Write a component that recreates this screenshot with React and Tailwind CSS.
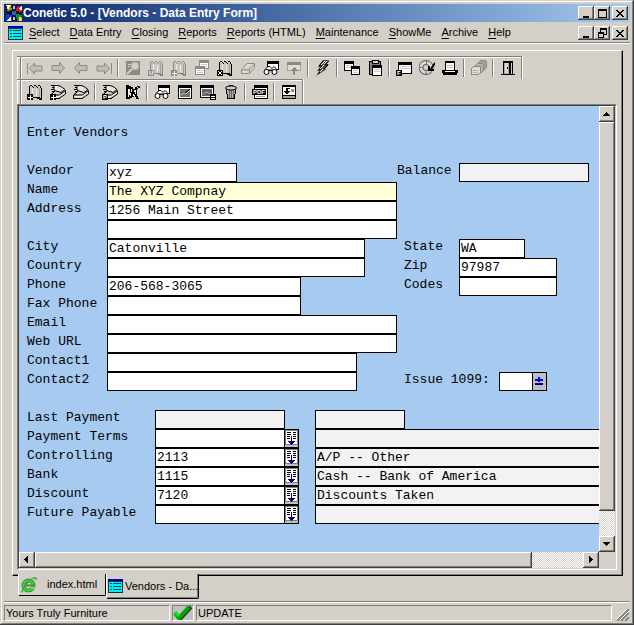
import React, { useState } from 'react';

const raised = 'bg-[#d4d0c8] shadow-[inset_-1px_-1px_0_#404040,inset_1px_1px_0_#ffffff,inset_-2px_-2px_0_#808080]';
const sunken = 'border border-t-[#808080] border-l-[#808080] border-r-white border-b-white';
const dither = 'bg-[repeating-conic-gradient(#ffffff_0_25%,#d4d0c8_0_50%)] bg-size-[2px_2px]';

/* ---------- small drawings ---------- */

const Svg = ({ children, className = 'w-4 h-4' }) => (
    <svg viewBox="0 0 16 16" className={`${className} shrink-0`} fill="none" stroke="currentColor" shapeRendering="crispEdges" aria-hidden="true">
        {children}
    </svg>
);

const Badge = ({ x = 0, y = 10, children }) => (
    <g>
        <rect x={x} y={y} width="6" height="6" fill="currentColor" stroke="none" />
        <g stroke="#fff">{children}</g>
    </g>
);

const Plus = () => <path d="M1 13.500h5M3.500 11v5" />;
const Cross = () => <path d="M1 11l4 4M5 11l-4 4" />;

const Letter = ({ x, y, size = 6, children }) => (
    <text x={x} y={y} fontSize={size} fontWeight="bold" fontFamily="Liberation Sans, sans-serif" fill="#fff" stroke="none">{children}</text>
);

const Book = ({ children }) => (
    <Svg>
        <path d="M3 2h6l5 2v11l-4-2H3z" fill="#c8c6c0" stroke="none" />
        <path d="M2 2h1v10H2zM3 1h2v1H3zM5 2h1v1H5zM6 3h1v1H6zM7 1h2v1H7zM9 2h1v1H9zM10 3h1v1h-1zM11 1h2v1h-2zM13 2h1v2h-1z" fill="currentColor" stroke="none" />
        <path d="M14 4h1v11h-1zM12 14h3v2h-3zM6 13h5v1H6zM10 13h3v2h-3z" fill="currentColor" stroke="none" />
        <path d="M5.500 4v8M9.500 5v7" stroke="#eceae4" />
        <path d="M12 4h1v9h-1z" fill="#a4a29c" stroke="none" />
        {children}
    </Svg>
);

const Pages = ({ children }) => (
    <Svg>
        <path d="M4 1.500h4l3 1 4 3-4 3-5-1.500-2-1z" fill="#e8e6e0" shapeRendering="auto" />
        <path d="M1 1.500h3M2 3.500h2M1 5.500h3M2 7.500h2" />
        <path d="M5 7L.5 11v3.500h8.500l6.500-4.500V6.500l-6 4.500H1z" fill="#d4d0c8" shapeRendering="auto" />
        <path d="M2 12.500h7l6-4" stroke="#f4f2ee" shapeRendering="auto" />
        <path d="M1 14.500h9" />
        {children}
    </Svg>
);

const Win = ({ x = 0, y = 0, w = 10, h = 9 }) => (
    <g>
        <rect x={x + 0.5} y={y + 0.5} width={w - 1} height={h - 1} fill="#fff" />
        <rect x={x} y={y} width={w} height="3" fill="currentColor" stroke="none" />
        <path d={`M${x + 2} ${y + 4.5}h${w - 4}M${x + 2} ${y + 6.5}h${w - 4}`} stroke="#c8c8c8" />
    </g>
);

const arrowLeft = 'M1.500 8l5-5.500v3H14v5H6.500v3z';
const arrowRight = 'M14.500 8l-5-5.500v3H2v5h7.500v3z';

const icons = {
    first: <Svg><path d="M.5 3v11" /><path d="M2.500 8.500l5-5.500v3H15v5H7.500v3z" fill="#c0beb8" shapeRendering="auto" /></Svg>,
    next: <Svg><path d={arrowRight} fill="#c0beb8" shapeRendering="auto" /></Svg>,
    prev: <Svg><path d={arrowLeft} fill="#c0beb8" shapeRendering="auto" /></Svg>,
    last: <Svg><path d="M15.500 3v11" /><path d="M13.500 8.500l-5-5.500v3H1v5h7.500v3z" fill="#c0beb8" shapeRendering="auto" /></Svg>,
    find: (
        <Svg>
            <path d="M1 1h14v14H1z" fill="currentColor" stroke="none" />
            <path d="M3 4h3M3 6h2" stroke="#d4d0c8" />
            <circle cx="10" cy="6" r="4" fill="#d4d0c8" shapeRendering="auto" stroke="#a8a6a0" />
            <path d="M7 9l-5 5" stroke="#d4d0c8" strokeWidth="2" shapeRendering="auto" />
        </Svg>
    ),
    bookU: <Book><Badge><Letter x="1" y="15">U</Letter></Badge></Book>,
    bookAdd: <Book><Badge><Plus /></Badge></Book>,
    bookDelete: <Book><Badge><Cross /></Badge></Book>,
    cards: <Svg><Win x={5} y={0} w={10} h={9} /><Win x={1} y={6} w={10} h={9} /></Svg>,
    eraser: (
        <Svg>
            <path d="M1.500 10L7 3.500h7.500v4L9.500 13.500h-8zM1.500 10H9l5.500-6M9.500 10v3" fill="#dedcd6" shapeRendering="auto" />
        </Svg>
    ),
    browse: (
        <Svg>
            <rect x="4.500" y="1.500" width="11" height="8" fill="#fff" />
            <path d="M4 1h12v3H4z" fill="currentColor" stroke="none" />
            <path d="M2 9.500l3-3h2l2 2 2-2 3 3" fill="#fff" shapeRendering="auto" />
            <circle cx="3.500" cy="12" r="2.500" fill="#fff" shapeRendering="auto" />
            <circle cx="11.500" cy="12" r="2.500" fill="#fff" shapeRendering="auto" />
            <path d="M6 10.500h3" />
        </Svg>
    ),
    upload: (
        <Svg>
            <path d="M1.500 2.500h13v8h-13z" fill="#dedcd6" stroke="#a8a6a0" />
            <path d="M1 2h14v3H1z" fill="currentColor" stroke="none" />
            <path d="M8 7h1v1h1v1h1v1h1v1H9v4H7v-4H5v-1h1V9h1V8h1z" fill="currentColor" stroke="none" />
        </Svg>
    ),
    flash: (
        <Svg>
            <path d="M8 0h6l-3 4h3l-4 5h2L1 16l3-5H2l3-4H3z" fill="#505050" stroke="none" shapeRendering="auto" />
            <path d="M8 1L4 6h3l-3 4h3l-4 4M14 1l-4 4h3L9 9" shapeRendering="auto" />
            <path d="M10 1L6 5M9 5L5 9M12 1L9 4M8 9l-3 3" stroke="#e8e8e8" shapeRendering="auto" />
        </Svg>
    ),
    copy: <Svg><Win x={0} y={1} w={10} h={10} /><Win x={7} y={6} w={9} h={9} /></Svg>,
    paste: (
        <Svg>
            <rect x="2.500" y="1.500" width="11" height="13" fill="#808080" />
            <path d="M5 0h6v3H5z" fill="#d4d0c8" />
            <Win x={5} y={5} w={10} h={11} />
        </Svg>
    ),
    formF: <Svg><Win x={2} y={2} w={14} h={12} /><path d="M2 2h1v12H2z" fill="currentColor" stroke="none" /><Badge><Letter x="1" y="15">F</Letter></Badge></Svg>,
    refresh: (
        <Svg>
            <circle cx="7" cy="7.500" r="5" stroke="#606060" strokeWidth="5" shapeRendering="auto" />
            <circle cx="7" cy="7.500" r="5" stroke="#dcdad4" strokeWidth="3" strokeDasharray="7 1" shapeRendering="auto" />
            <path d="M16 3l-4 6M10 6v4h5" shapeRendering="auto" strokeWidth="2" />
        </Svg>
    ),
    print: (
        <Svg>
            <path d="M3.500 1.500h9v9h-9z" fill="#fff" />
            <path d="M3 1h10v2H3z" fill="currentColor" stroke="none" />
            <path d="M5 5.500h6M5 7.500h6" stroke="#c0c0c0" />
            <path d="M3 10.500H.5v2h15v-2H13" />
            <path d="M0 11h16v2h-1v2H1v-2H0z" fill="currentColor" stroke="none" />
            <path d="M3 11.500h10" stroke="#fff" />
        </Svg>
    ),
    stack: (
        <Svg>
            <path d="M6.500 3.500l3-3h5l1 1v6l-4 4" fill="#a4a29c" />
            <path d="M3.500 6.500l3-3h5l1 1v6l-3 3" fill="#b4b2ac" />
            <path d="M.5 8.500l2-2h7v6l-2 2h-7z" fill="#dedcd6" />
            <path d="M2 10.500h5M2 12.500h5" stroke="#b4b2ac" />
        </Svg>
    ),
    exit: (
        <Svg>
            <path d="M3.500 14V1.500h9V14M1 14.500h14M4 2.500h8" />
            <path d="M4 3h5v11H4z" fill="#a8a8a8" stroke="none" />
            <path d="M5 3h3v10H5z" fill="#dcdad4" stroke="none" />
            <path d="M9 3h2v12H9z" fill="currentColor" stroke="none" />
            <path d="M7.500 7v2" />
        </Svg>
    ),
    pagesAdd: <Pages><Badge><Plus /></Badge></Pages>,
    pages: <Pages />,
    pagesP: <Pages><Badge><Letter x="1" y="15">P</Letter></Badge></Pages>,
    cut: (
        <Svg>
            <path d="M1 1h3v1h2v1h2v2h2V3h2V2h3v2h-2v1h-1v7h1v2h1v1h-3v-2h-1v-2H9v2H7v1H5v1H1z" fill="currentColor" stroke="none" />
            <path d="M3 5h2v6H4v2H3zM6 5h1v3H6zM5 9h1v3H5zM9 6h2v4h-1V8H9zM8 10h1v2H8z" fill="#f0eee8" stroke="none" />
            <path d="M12 3.500h1" stroke="#f0eee8" />
        </Svg>
    ),
    picture: (
        <Svg>
            <rect x="1.500" y="1.500" width="13" height="13" fill="#fff" />
            <path d="M1 1h14v3H1z" fill="currentColor" stroke="none" />
            <path d="M3 5h10v8H3z" fill="#707070" stroke="none" />
            <path d="M4 11l3-2 2 1 4-4" stroke="#c0c0c0" shapeRendering="auto" />
            <path d="M8 9l5-4" shapeRendering="auto" />
        </Svg>
    ),
    pictureSet: (
        <Svg>
            <rect x=".5" y="1.500" width="13" height="12" fill="#fff" />
            <path d="M0 1h14v3H0z" fill="currentColor" stroke="none" />
            <path d="M2 5h10v7H2z" fill="#606060" stroke="none" />
            <path d="M3 10l3-2 5 2" stroke="#b0b0b0" shapeRendering="auto" />
            <Badge x={10}><path d="M11 12.500h4M11 14.500h4" /></Badge>
        </Svg>
    ),
    trash: (
        <Svg>
            <path d="M3.500 5l1 9.500h7l1-9.500" fill="#b0b0b0" />
            <path d="M6.500 6v8M8.500 6v8M10.500 6v8" stroke="#606060" />
            <ellipse cx="8" cy="4" rx="5.500" ry="2" fill="#d4d0c8" shapeRendering="auto" />
            <path d="M6 1.500h4" />
        </Svg>
    ),
    pdf: (
        <Svg>
            <rect x="2.500" y="1.500" width="13" height="13" fill="#fff" />
            <path d="M2 1h14v3H2zM0 5h14v6H0z" fill="currentColor" stroke="none" />
            <path d="M4 12.500h9" stroke="#a0a0a0" />
            <Letter x="1" y="10">PDF</Letter>
        </Svg>
    ),
    download: (
        <Svg>
            <rect x="1.500" y="1.500" width="13" height="13" fill="#fff" />
            <path d="M1 1h14v2H1zM1 11h14v1H1z" fill="currentColor" stroke="none" />
            <path d="M2 12h12v2H2z" fill="#a0a0a0" stroke="none" />
            <path d="M5 4h4v1H7v2h2v1H8v1H7v1H5V9H4V8H3V7h2z" fill="currentColor" stroke="none" />
            <path d="M10 5h3v3h-3z" fill="#909090" stroke="none" />
        </Svg>
    )
};

const AppIcon = () => (
    <svg viewBox="0 0 16 16" className="w-4 h-4 shrink-0" shapeRendering="crispEdges" aria-hidden="true">
        <path d="M0 0h16v16H0z" fill="#0a1030" />
        <path d="M0 0h5l-3 5z" fill="#ffffc0" />
        <path d="M5 0l1 5-5 1z" fill="#a8a000" />
        <path d="M16 1v6l-6-1 1-5z" fill="#e01818" />
        <path d="M16 1l-4 3 4 1z" fill="#fff" />
        <path d="M0 9l6 1v6H0z" fill="#1838c8" />
        <path d="M0 16l5-5v5z" fill="#fff" />
        <path d="M10 9l6 1v5l-5 1z" fill="#109030" />
        <path d="M13 12l3 1v3h-3z" fill="#ffe040" />
        <path d="M6 6h4v4H6z" fill="#2860c0" />
        <path d="M7 1h2v3H7zM7 12h2v3H7z" fill="#c0c0c0" />
    </svg>
);

const FormIcon = () => (
    <svg viewBox="0 0 15 14" className="w-[15px] h-[14px] shrink-0" shapeRendering="crispEdges" aria-hidden="true">
        <path d="M0 0h15v14H0z" fill="#003c50" />
        <path d="M1 3h13v10H1z" fill="#00f0f0" />
        <path d="M0 0h15v2H0z" fill="#0000b0" />
        <path d="M2 4h2v1H2zM2 7h2v1H2zM2 10h2v1H2zM5 4h8v1H5zM5 7h8v1H5zM5 10h8v1H5z" fill="#004860" />
    </svg>
);

const BrowserIcon = () => (
    <svg viewBox="0 0 16 16" className="w-4 h-4 shrink-0" fill="none" aria-hidden="true">
        <circle cx="7.500" cy="8.500" r="5" stroke="#2f9a2f" strokeWidth="4" />
        <circle cx="7.500" cy="8.500" r="5" stroke="#56c84e" strokeWidth="2" />
        <path d="M4 8.500h9" stroke="#2f9a2f" strokeWidth="2" />
        <path d="M10 11h4" stroke="#d4d0c8" strokeWidth="1" />
        <path d="M2 14C-1 17 3 9 8 4c4-4 8-4 7-1" stroke="#3aa838" strokeWidth="1.500" />
    </svg>
);

const CheckIcon = () => (
    <svg viewBox="0 0 20 14" className="w-5 h-[14px]" fill="none" aria-hidden="true">
        <path d="M4 9l3 4L18 1" stroke="#303030" strokeWidth="4" />
        <path d="M2 7l4 5L16 1" stroke="#00a800" strokeWidth="4" />
        <path d="M2 6l4 4" stroke="#00f000" strokeWidth="3" />
    </svg>
);

const glyphs = {
    Minimize: <path d="M3 9h6v2H3z" />,
    Maximize: <path fillRule="evenodd" d="M2 2h9v9H2zM3 4h7v6H3z" />,
    Restore: <path fillRule="evenodd" d="M4 1h7v7H8v3H2V5h2zM5 3v2h3v2h2V3zM3 7h4v3H3z" />,
    Close: <path d="M2 3h2v1h1v1h2V4h1V3h2v1H9v1H8v1H7v1h1v1h1v1h1v1H8V9H7V8H5v1H4v1H2V9h1V8h1V7h1V6H4V5H3V4H2z" />
};

const CaptionButtons = ({ middle, target }) => (
    <div className="ml-auto flex pr-[2px]">
        {['Minimize', middle, 'Close'].map((name) => (
            <button
                key={name}
                type="button"
                aria-label={`${name} ${target}`}
                className={`flex h-[14px] w-4 items-center justify-center ${raised} ${name === 'Close' ? 'ml-[2px]' : ''}`}
            >
                <svg viewBox="0 0 13 12" className="h-3 w-[13px]" fill="#000" shapeRendering="crispEdges" aria-hidden="true">
                    {glyphs[name]}
                </svg>
            </button>
        ))}
    </div>
);

/* ---------- toolbars ---------- */

const Toolbar = ({ items, label, className }) => (
    <div
        role="toolbar"
        aria-label={label}
        className={`flex w-fit items-center border-t border-r border-[#808080] pr-[2px] shadow-[inset_0_1px_0_#ffffff,inset_1px_0_0_#ffffff,1px_0_0_#ffffff] ${className}`}
    >
        <span className="mr-px ml-[3px] h-full w-[2px] border-l border-r border-l-[#808080] border-r-white" />
        {items.map((item, i) =>
            item === '|' ? (
                <span key={i} className="mx-[2px] h-[18px] w-[2px] border-l border-r border-l-[#808080] border-r-white" />
            ) : (
                <button
                    key={i}
                    type="button"
                    aria-label={item[0]}
                    disabled={item[1] === 'off'}
                    className="flex h-5 w-[23px] items-center justify-center text-black disabled:text-[#8c8a86]"
                >
                    {icons[item[0]]}
                </button>
            )
        )}
    </div>
);

const topTools = [
    ['first', 'off'], ['next', 'off'], ['prev', 'off'], ['last', 'off'], '|',
    ['find', 'off'], ['bookU', 'off'], ['bookAdd', 'off'], ['cards', 'off'], ['bookDelete'], ['eraser', 'off'], ['browse'], ['upload', 'off'], '|',
    ['flash'], '|', ['copy'], ['paste'], '|', ['formF'], ['refresh'], ['print'], '|', ['stack', 'off'], '|', ['exit']
];

const bottomTools = [
    ['bookAdd'], ['pagesAdd'], ['pages'], '|', ['pagesP'], ['cut'], '|',
    ['browse'], ['picture'], ['pictureSet'], ['trash'], '|', ['pdf'], '|', ['download']
];

/* ---------- form ---------- */

const Field = ({ id, value = '', width, tone = 'bg-white', ...rest }) => (
    <input
        id={id}
        name={id}
        defaultValue={value}
        className={`h-[19px] shrink-0 rounded-none border border-black px-px outline-none ${tone} ${width}`}
        {...rest}
    />
);

const Label = ({ htmlFor, className, children }) => (
    <label htmlFor={htmlFor} className={`h-[15px] shrink-0 leading-[15px] ${className}`}>{children}</label>
);

const rows = [
    { id: 'vendor', label: 'Vendor', value: 'xyz', width: 'w-[130px]', side: { id: 'balance', label: 'Balance', width: 'w-[130px]', labelClass: 'w-[62px] pr-2 text-right', tone: 'bg-[#f2f2f2]', readOnly: true } },
    { id: 'name', label: 'Name', value: 'The XYZ Compnay', width: 'w-[290px]', tone: 'bg-[#ffffd8]' },
    { id: 'address', label: 'Address', value: '1256 Main Street', width: 'w-[290px]' },
    { id: 'address2', label: '', width: 'w-[290px]' },
    { id: 'city', label: 'City', value: 'Catonville', width: 'w-[258px]', side: { id: 'state', label: 'State', value: 'WA', width: 'w-[66px]' } },
    { id: 'country', label: 'Country', width: 'w-[258px]', side: { id: 'zip', label: 'Zip', value: '97987', width: 'w-[98px]' } },
    { id: 'phone', label: 'Phone', value: '206-568-3065', width: 'w-[194px]', side: { id: 'codes', label: 'Codes', width: 'w-[98px]' } },
    { id: 'fax', label: 'Fax Phone', width: 'w-[194px]' },
    { id: 'email', label: 'Email', width: 'w-[290px]' },
    { id: 'web', label: 'Web URL', width: 'w-[290px]' },
    { id: 'contact1', label: 'Contact1', width: 'w-[250px]' },
    { id: 'contact2', label: 'Contact2', width: 'w-[250px]', side: { id: 'issue1099', label: 'Issue 1099:', width: 'w-[34px]', labelClass: 'w-[102px] pl-[7px]', toggle: true } }
];

const accounts = [
    { id: 'terms', label: 'Payment Terms', value: '', text: '' },
    { id: 'controlling', label: 'Controlling', value: '2113', text: 'A/P -- Other' },
    { id: 'bank', label: 'Bank', value: '1115', text: 'Cash -- Bank of America' },
    { id: 'discount', label: 'Discount', value: '7120', text: 'Discounts Taken' },
    { id: 'future', label: 'Future Payable', value: '', text: '' }
];

const ToggleButton = () => (
    <button type="button" aria-label="Toggle Issue 1099" className="flex h-[19px] w-[14px] items-center justify-center border border-l-0 border-black bg-[#c0c0c0]">
        <svg viewBox="0 0 9 9" className="h-[9px] w-[9px] shrink-0" shapeRendering="crispEdges" aria-hidden="true">
            <path d="M0 2h8v2H0zM3 0h2v5H3z" fill="#0000ff" />
            <path d="M0 6h8v2H0z" fill="#000080" />
        </svg>
    </button>
);

const LookupButton = ({ label }) => (
    <button type="button" aria-label={`Look up ${label}`} className="flex h-[19px] w-[14px] border border-l-0 border-black bg-[#c0c0c0]">
        <svg viewBox="0 0 13 17" className="h-[17px] w-[13px] shrink-0" shapeRendering="crispEdges" aria-hidden="true">
            <path d="M0 0h13v15H0z" fill="#808080" />
            <path d="M1 1h11v13H1z" fill="#fff" />
            <path d="M2 2h4v1H2zM8 2h3v1H8zM2 4h4v1H2zM8 4h3v1H8zM2 6h3v1H2zM8 6h3v1H8zM2 8h3v1H2zM8 8h3v1H8z" fill="#000" />
            <path d="M6 6h1v5h3v1H9v1H8v1H7v1H6v-1H5v-1H4v-1H3v-1h3z" fill="#000080" />
        </svg>
    </button>
);

const SideField = ({ labelClass = 'w-[62px] pl-[7px]', label, toggle, ...field }) => (
    <>
        <Label htmlFor={field.id} className={labelClass}>{label}</Label>
        <Field {...field} />
        {toggle && <ToggleButton />}
    </>
);

const VendorForm = () => (
    <form className="min-w-0 flex-1 overflow-hidden bg-[#a6caf0] pt-[19px] pb-7 pl-2 font-['Liberation_Mono',monospace] text-[13px] text-black">
        <h1 className="mb-[19px] h-[19px] leading-[15px]">Enter Vendors</h1>
        {rows.map(({ side, label, ...field }) => (
            <div key={field.id} className="flex">
                <Label htmlFor={field.id} className="w-20">{label}</Label>
                <div className="flex w-[290px] shrink-0">
                    <Field {...field} aria-label={label || 'Address line 2'} />
                </div>
                {side && <SideField {...side} />}
            </div>
        ))}
        <div className="mt-[19px] flex">
            <Label htmlFor="lastPayment" className="w-32">Last Payment</Label>
            <div className="flex w-40 shrink-0">
                <Field id="lastPayment" width="w-[130px]" tone="bg-[#f2f2f2]" readOnly />
            </div>
            <Field id="lastAmount" width="w-[90px]" tone="bg-[#f2f2f2]" aria-label="Last payment amount" readOnly />
        </div>
        {accounts.map((a) => (
            <div key={a.id} className="flex">
                <Label htmlFor={a.id} className="w-32">{a.label}</Label>
                <div className="flex w-40 shrink-0">
                    <Field id={a.id} value={a.value} width="w-[130px]" />
                    <LookupButton label={a.label} />
                </div>
                <Field id={`${a.id}Text`} value={a.text} width="min-w-0 flex-1 border-r-0" tone="bg-[#f2f2f2]" aria-label={`${a.label} description`} readOnly />
            </div>
        ))}
    </form>
);

/* ---------- scroll bars ---------- */

const ScrollButton = ({ label, d }) => (
    <button type="button" aria-label={label} className={`flex h-4 w-4 shrink-0 items-center justify-center ${raised}`}>
        <svg viewBox="0 0 8 8" className="h-2 w-2" fill="#000" shapeRendering="crispEdges" aria-hidden="true"><path d={d} /></svg>
    </button>
);

const VerticalBar = () => (
    <div className={`flex w-4 shrink-0 flex-col ${dither}`}>
        <ScrollButton label="Scroll up" d="M3 2h1v1h1v1h1v1h1v1H0V5h1V4h1V3h1z" />
        <div className={`grow-[94] ${raised}`} />
        <div className="grow-[6]" />
        <ScrollButton label="Scroll down" d="M0 2h7v1H6v1H5v1H4v1H3V5H2V4H1V3H0z" />
    </div>
);

const HorizontalBar = () => (
    <div className="flex">
        <div className={`flex flex-1 ${dither}`}>
            <ScrollButton label="Scroll left" d="M5 0v7H4V6H3V5H2V4H1V3h1V2h1V1h1V0z" />
            <div className={`grow-[497] ${raised}`} />
            <div className="grow-[51]" />
            <ScrollButton label="Scroll right" d="M2 0v7h1V6h1V5h1V4h1V3H5V2H4V1H3V0z" />
        </div>
        <div className="h-4 w-4 bg-[#d4d0c8]" />
    </div>
);

const menus = ['Select', 'Data Entry', 'Closing', 'Reports', 'Reports (HTML)', 'Maintenance', 'ShowMe', 'Archive', 'Help'];

const App = () => {
    const [tab, setTab] = useState('vendors');
    const tabBase = 'flex items-center border-r border-b border-black bg-[#d4d0c8] whitespace-nowrap rounded-b-[2px]';

    return (
        <div className="flex min-h-screen flex-col bg-[#d4d0c8] p-1 pb-[2px] font-['Liberation_Sans',sans-serif] text-[11px] text-black shadow-[inset_-1px_-1px_0_#404040,inset_1px_1px_0_#d4d0c8,inset_-2px_-2px_0_#808080,inset_2px_2px_0_#ffffff]">
            <header className="flex h-[18px] items-center bg-linear-to-r from-[#0a246a] to-[#a6caf0] pl-[2px]">
                <AppIcon />
                <span className="pl-px text-[12px] font-bold text-white">Conetic 5.0 - [Vendors - Data Entry Form]</span>
                <CaptionButtons middle="Maximize" target="window" />
            </header>

            <nav className="flex h-[22px] items-center border-b border-white pl-1 shadow-[inset_0_-1px_0_#808080]">
                <FormIcon />
                <div className="flex gap-[10px] pl-[6px]">
                    {menus.map((m) => (
                        <button key={m} type="button" className="whitespace-nowrap">
                            <span className="underline underline-offset-2">{m[0]}</span>{m.slice(1)}
                        </button>
                    ))}
                </div>
                <CaptionButtons middle="Restore" target="form" />
            </nav>

            <main className="mt-[6px] mr-[7px] ml-2 flex flex-1 flex-col border border-t-white border-r-black border-b-black border-l-white pt-[5px] pr-[5px] pb-[5px] pl-1 shadow-[inset_-1px_-1px_0_#808080]">
                <Toolbar label="Records" items={topTools} className="h-[23px]" />
                <Toolbar label="Tools" items={bottomTools} className="h-[25px]" />
                <div className="flex flex-1 flex-col border border-t-[#808080] border-r-white border-b-white border-l-[#808080]">
                    <div className="flex flex-1 flex-col border border-t-[#404040] border-r-[#d4d0c8] border-b-[#d4d0c8] border-l-[#404040]">
                        <div className="flex flex-1">
                            <VendorForm />
                            <VerticalBar />
                        </div>
                        <HorizontalBar />
                    </div>
                </div>
            </main>

            <div role="tablist" className="relative -mt-[2px] ml-[14px] flex h-[27px] items-start">
                <button type="button" role="tab" aria-selected={tab === 'index'} onClick={() => setTab('index')} className={`${tabBase} h-[22px] w-[88px] gap-[10px] border-l border-l-white pl-[2px]`}>
                    <BrowserIcon />
                    index.html
                </button>
                <button type="button" role="tab" aria-selected={tab === 'vendors'} onClick={() => setTab('vendors')} className={`${tabBase} h-[25px] w-[93px] gap-[2px] border-l border-l-white pl-px shadow-[inset_-1px_-1px_0_#808080]`}>
                    <FormIcon />
                    Vendors - Da...
                </button>
            </div>

            <footer className="flex h-[22px] border-t border-[#808080] pt-[3px] pb-[2px] shadow-[inset_0_1px_0_#ffffff]">
                <div className={`flex h-4 w-[166px] items-center px-[1px] ${sunken}`}>Yours Truly Furniture</div>
                <div className={`ml-[2px] flex h-4 w-[22px] items-center bg-[#c0c0c0] ${sunken}`}><CheckIcon /></div>
                <div className={`ml-[2px] flex h-4 flex-1 items-center px-[1px] ${sunken}`}>UPDATE</div>
                <svg viewBox="0 0 12 12" className="mt-1 mr-[1px] ml-[5px] h-3 w-3" stroke="#808080" strokeWidth="2" aria-hidden="true">
                    <path d="M0 12L12 0M4 12l8-8M8 12l4-4" />
                    <path d="M-1 11L11-1M3 11l9-9M7 11l5-5" stroke="#fff" strokeWidth="1" />
                </svg>
            </footer>
        </div>
    );
};

export default App;
